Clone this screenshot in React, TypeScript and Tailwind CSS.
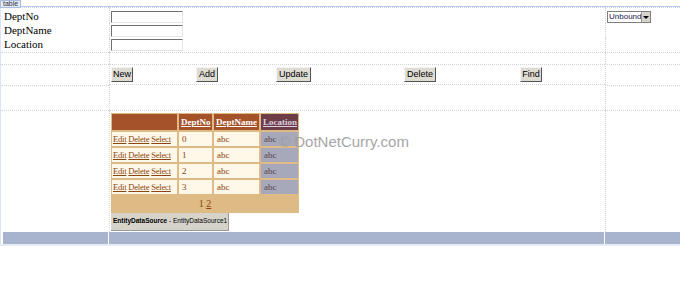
import React from 'react';

const dot = 'border-dotted border-[#d4d4d4]';

const TextBox: React.FC = () => (
  <div className="h-[12px] w-[72px] bg-white border border-t-[#707070] border-l-[#707070] border-b-[#e4e4e4] border-r-[#e4e4e4]" />
);

const Btn: React.FC<{ label: string; w: string; ml: string }> = ({ label, w, ml }) => (
  <div
    className={`${w} ${ml} h-[15px] flex items-center justify-center bg-[#dedbd3] border border-t-[#f4f4f4] border-l-[#f4f4f4] border-b-[#555] border-r-[#555] text-[9px] leading-none text-black`}
    style={{ fontFamily: '"Liberation Sans", Arial, sans-serif' }}
  >
    {label}
  </div>
);

const rows = ['0', '1', '2', '3'];

const GridView: React.FC = () => (
  <div className="w-[188px] bg-[#deba84] p-[1px]" style={{ fontFamily: '"Liberation Serif", "Times New Roman", serif' }}>
    <div className="grid grid-cols-[65px_33px_45px_37px] gap-[2px] text-[9px] leading-none whitespace-nowrap">
      <div className="h-[16px] bg-[#a55129]" />
      <div className="h-[16px] bg-[#a55129] flex items-center px-[2px] text-white font-bold underline">DeptNo</div>
      <div className="h-[16px] bg-[#a55129] flex items-center px-[2px] text-white font-bold underline">DeptName</div>
      <div className="h-[16px] bg-[#6e3d47] flex items-center px-[2px] text-[#d9cfe0] font-bold underline">Location</div>
      {rows.map((r) => (
        <React.Fragment key={r}>
          <div className="h-[14px] bg-[#fff7e7] flex items-center pl-[1px] text-[#8c4510] text-[8.5px] tracking-[-0.2px]">
            <span className="underline">Edit</span>&nbsp;<span className="underline">Delete</span>&nbsp;<span className="underline">Select</span>
          </div>
          <div className="h-[14px] bg-[#fff7e7] flex items-center px-[3px] text-[#8c4510]">{r}</div>
          <div className="h-[14px] bg-[#fff7e7] flex items-center px-[3px] text-[#8c4510]">abc</div>
          <div className="h-[14px] bg-[#a7a9ba] flex items-center px-[3px] text-[#5b4450]">abc</div>
        </React.Fragment>
      ))}
      <div className="col-span-4 h-[16px] flex items-center justify-center text-[#8c4510] text-[10px]">
        <span>1</span>&nbsp;<span className="underline">2</span>
      </div>
    </div>
  </div>
);

export default function App() {
  return (
    <div className="relative w-[680px] h-[285px] bg-white overflow-hidden">
      {/* tag */}
      <div
        className="absolute left-0 top-0 z-10 h-[8px] px-[2px] bg-[#e2eaf8] border border-[#a9bde0] text-[7px] leading-[6px] text-[#333]"
        style={{ fontFamily: '"Liberation Sans", Arial, sans-serif' }}
      >
        table
      </div>

      <div className="pt-[6px]">
        <div
          className="grid grid-cols-[108px_496px_1fr] grid-rows-[16px_15px_14px_12px_21px_25px_122px_12px] border-t border-l border-b-2 border-t-[#b8caec] border-l-[#dbe4f5] border-b-[#e6ecf7]"
          style={{ fontFamily: '"Liberation Serif", "Times New Roman", serif' }}
        >
          {/* row 1 */}
          <div className={`pl-[3px] pt-[2px] text-[11px] leading-[13px] border-t ${dot}`}>DeptNo</div>
          <div className={`pl-[1px] pt-[3px] border-t border-l ${dot}`}>
            <TextBox />
          </div>
          <div className={`pl-[1px] pt-[3px] border-t border-l ${dot}`}>
            <div
              className="flex h-[12px] w-[44px] border border-[#7f7f7f] bg-white"
              style={{ fontFamily: '"Liberation Sans", Arial, sans-serif' }}
            >
              <div className="flex-1 text-[8px] leading-[10px] pl-[1px] text-[#202050]">Unbound</div>
              <div className="w-[10px] bg-[#d6d3cb] border-l border-[#9a9a9a] flex items-center justify-center">
                <div className="w-0 h-0 border-l-[3px] border-r-[3px] border-t-[3px] border-l-transparent border-r-transparent border-t-black" />
              </div>
            </div>
          </div>

          {/* row 2 */}
          <div className="pl-[3px] pt-[1px] text-[11px] leading-[13px]">DeptName</div>
          <div className={`pl-[1px] pt-[2px] border-l ${dot}`}>
            <TextBox />
          </div>
          <div className={`border-l ${dot}`} />

          {/* row 3 */}
          <div className="pl-[3px] text-[11px] leading-[13px]">Location</div>
          <div className={`pl-[1px] pt-[1px] border-l ${dot}`}>
            <TextBox />
          </div>
          <div className={`border-l ${dot}`} />

          {/* row 4 */}
          <div className={`border-t ${dot}`} />
          <div className={`border-t border-l ${dot}`} />
          <div className={`border-t border-l ${dot}`} />

          {/* row 5 buttons */}
          <div className={`border-t ${dot}`} />
          <div className={`border border-r-0 ${dot} flex items-center pl-[1px]`}>
            <Btn label="New" w="w-[22px]" ml="ml-0" />
            <Btn label="Add" w="w-[22px]" ml="ml-[63px]" />
            <Btn label="Update" w="w-[35px]" ml="ml-[58px]" />
            <Btn label="Delete" w="w-[32px]" ml="ml-[93px]" />
            <Btn label="Find" w="w-[22px]" ml="ml-[84px]" />
          </div>
          <div className={`border-t border-l ${dot}`} />

          {/* row 6 */}
          <div className={`border-t ${dot}`} />
          <div className={`border-l ${dot}`} />
          <div className={`border-t border-l ${dot}`} />

          {/* row 7 grid */}
          <div className={`border-t ${dot}`} />
          <div className={`pl-[1px] pt-[2px] border-t border-l ${dot}`}>
            <GridView />
            <div
              className="w-[118px] h-[18px] bg-[#d6d3cb] border-r border-b border-[#9a9a9a] flex items-center pl-[2px] text-[6.5px] leading-none text-black whitespace-nowrap"
              style={{ fontFamily: '"Liberation Sans", Arial, sans-serif' }}
            >
              <span className="font-bold">EntityDataSource</span>
              <span>&nbsp;- EntityDataSource1</span>
            </div>
          </div>
          <div className={`border-t border-l ${dot}`} />

          {/* row 8 bar */}
          <div className="ml-[2px] bg-[#a8b3cd] border-r border-white" />
          <div className="bg-[#a8b3cd] border-r border-white" />
          <div className="bg-[#a8b3cd]" />
        </div>
      </div>

      {/* watermark */}
      <div
        className="absolute left-[279px] top-[134px] text-[15px] leading-none text-[#9c9c9c] opacity-90"
        style={{ fontFamily: '"Liberation Sans", Arial, sans-serif' }}
      >
        © DotNetCurry.com
      </div>
    </div>
  );
}
